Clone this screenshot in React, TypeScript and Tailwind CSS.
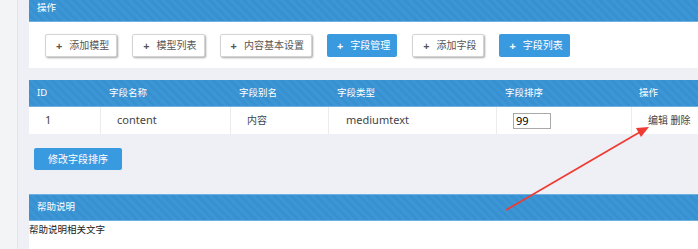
import React from "react";

const stripe =
  "bg-[repeating-linear-gradient(45deg,#3c96d5_0px,#3c96d5_3px,#3790cf_3px,#3790cf_6px)]";

function Btn({ label, primary }: { label: string; primary?: boolean }) {
  return (
    <div
      className={
        primary
          ? "h-[23px] flex items-center pl-[10px] pr-[7px] gap-[7px] rounded-[2px] bg-[#3a9ae0] text-white text-[10px]"
          : "h-[23px] flex items-center pl-[10px] pr-[7px] gap-[7px] rounded-[2px] bg-white border border-[#d4d4d4] shadow-[1px_1px_2px_rgba(0,0,0,0.35)] text-[#555] text-[10px]"
      }
    >
      <span className="text-[11px] font-bold leading-none">+</span>
      <span>{label}</span>
    </div>
  );
}

export default function App() {
  const cols = "grid grid-cols-[72px_130px_98px_168px_135px_1fr]";
  return (
    <div
      className="relative flex w-[698px] h-[249px] overflow-hidden bg-[#eff0f5]"
      style={{ fontFamily: '"Noto Sans", "Noto Sans CJK SC", sans-serif' }}
    >
      <div className="w-[18px] shrink-0 bg-[#f3f4f6] border-r border-[#e3e4e8]" />
      <div className="flex-1 pl-[11px] flex flex-col">
        {/* 操作 panel */}
        <div className={`${stripe} h-[22px] border-b border-[#6eb0e0] flex items-center pl-[8px] text-white text-[9.5px]`}>
          <span className="-mt-[5px]">操作</span>
        </div>
        <div className="bg-white h-[46px] flex items-center pl-[16px] gap-[15px]">
          <Btn label="添加模型" />
          <Btn label="模型列表" />
          <Btn label="内容基本设置" />
          <Btn label="字段管理" primary />
          <Btn label="添加字段" />
          <Btn label="字段列表" primary />
        </div>

        {/* table */}
        <div className="mt-[12px]">
          <div className={`${cols} ${stripe} h-[27px] border-b border-[#6eb0e0] items-center text-white text-[9.5px]`}>
            <div className="pl-[8px]">ID</div>
            <div className="pl-[8px]">字段名称</div>
            <div className="pl-[8px]">字段别名</div>
            <div className="pl-[8px]">字段类型</div>
            <div className="pl-[8px]">字段排序</div>
            <div className="pl-[7px]">操作</div>
          </div>
          <div className={`${cols} h-[27px] bg-white text-[11px] text-[#444]`}>
            <div className="pl-[16px] flex items-center border-r border-[#ececec]">1</div>
            <div className="pl-[16px] flex items-center border-r border-[#ececec]">content</div>
            <div className="pl-[16px] flex items-center border-r border-[#ececec] text-[10px]">内容</div>
            <div className="pl-[17px] flex items-center border-r border-[#ececec]">mediumtext</div>
            <div className="pl-[16px] flex items-center border-r border-[#ececec]">
              <div className="w-[38px] h-[16px] border border-[#a9a9a9] bg-white pl-[2px] text-[11px] text-black leading-[14px]">
                99
              </div>
            </div>
            <div className="pl-[16px] flex items-center text-[10px]">编辑 删除</div>
          </div>
        </div>

        <div className="mt-[14px] ml-[5px] w-[88px] h-[22px] rounded-[2px] bg-[#3a9ae0] text-white text-[10px] flex items-center justify-center">
          修改字段排序
        </div>

        {/* 帮助说明 */}
        <div className={`mt-[24px] ${stripe} h-[27px] border-y border-[#6eb0e0] flex items-center pl-[8px] text-white text-[9.5px]`}>
          帮助说明
        </div>
        <div className="bg-white flex-1 text-[9.5px] text-[#222] leading-[16px] pt-[1px]">
          帮助说明相关文字
        </div>
      </div>

      {/* annotation arrow */}
      <svg className="absolute left-0 top-0 pointer-events-none" width="698" height="249">
        <line x1="506" y1="210" x2="640" y2="132" stroke="#ee3b33" strokeWidth="1.8" />
        <polygon points="649,127 636,128 641,137" fill="#ee3b33" />
      </svg>
    </div>
  );
}
